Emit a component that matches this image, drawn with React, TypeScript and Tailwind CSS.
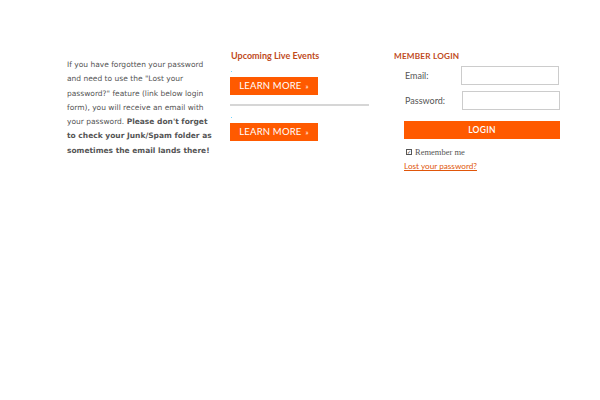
import React from 'react';

const body = 'font-["DejaVu_Sans",sans-serif]';
const head = 'font-["Lato",sans-serif]';

function LearnMore() {
  return (
    <div>
      <div className="h-[12px] flex items-center pl-px">
        <span className="w-px h-px bg-sky-300" />
      </div>
      <a className={`${head} flex items-center justify-center w-[88px] h-[18px] bg-[#ff5a00] text-white text-[9.5px] tracking-[0.2px]`}>
        LEARN MORE <span className="ml-1 text-[7px]">»</span>
      </a>
    </div>
  );
}

export default function App() {
  return (
    <div className="w-[600px] h-[400px] bg-white">
      <div className="flex pt-[49px] pl-[67px]">
        {/* Info */}
        <div className="w-[163px] pt-[9px]">
          <p className={`${body} w-[146px] text-[7.5px] leading-[14.3px] text-[#555]`}>
            If you have forgotten your password and need to use the "Lost your password?" feature (link below login form), you will receive an email with your password.{' '}
            <strong className="font-bold">Please don't forget to check your Junk/Spam folder as sometimes the email lands there!</strong>
          </p>
        </div>

        {/* Events */}
        <div className="w-[164px]">
          <h3 className={`${head} text-[9px] font-bold leading-[14px] text-[#c04a1c] mb-[2px] pl-px`}>Upcoming Live Events</h3>
          <LearnMore />
          <div className="w-[139px] h-[2px] bg-[#d6d6d6] mt-[9px] mb-[5px]" />
          <LearnMore />
        </div>

        {/* Login */}
        <div className="w-[167px]">
          <h3 className={`${head} text-[8.2px] font-bold leading-[14px] text-[#c04a1c] tracking-[0.2px]`}>MEMBER LOGIN</h3>
          <div className="pl-[10px] pt-[3px]">
            <div className="flex items-center h-[19px]">
              <label className={`${head} w-[57px] text-[9px] text-[#555] pl-px`}>Email:</label>
              <input className="w-[98px] h-[19px] border border-[#ccc] outline-none" />
            </div>
            <div className="flex items-center h-[19px] mt-[6px]">
              <label className={`${head} w-[57px] text-[9px] text-[#555] pl-px`}>Password:</label>
              <input type="password" className="w-[98px] h-[19px] border border-[#ccc] outline-none ml-px" />
            </div>
            <button className={`${head} mt-[11px] w-[156px] h-[18px] bg-[#ff5a00] text-white text-[8.5px] font-semibold tracking-[0.3px]`}>LOGIN</button>
            <div className="flex items-center mt-[8px] h-[10px]">
              <span className="w-[6px] h-[6px] border border-[#555] ml-[2px] mr-[3px] flex items-center justify-center text-[5px] leading-none text-[#333]">✓</span>
              <span className={`font-["Liberation_Serif",serif] text-[8.5px] text-[#555]`}>Remember me</span>
            </div>
            <a className={`${head} block mt-[3px] text-[8.2px] text-[#e0560a] underline`}>Lost your password?</a>
          </div>
        </div>
      </div>
    </div>
  );
}
